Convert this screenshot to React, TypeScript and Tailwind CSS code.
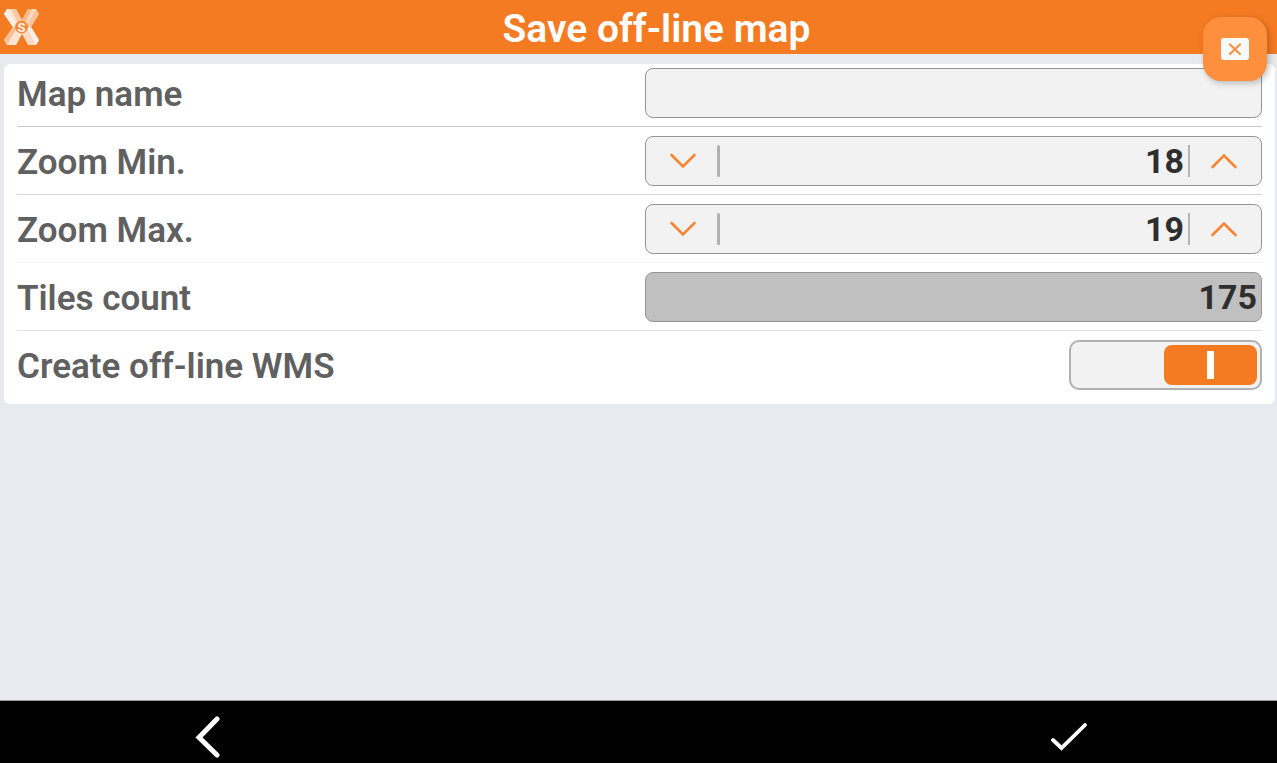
import { useState } from 'react';
import type { ReactNode } from 'react';

interface FieldRowProps {
  id: string;
  label: string;
  lineClass?: string;
  children: ReactNode;
}

function FieldRow({ id, label, lineClass, children }: FieldRowProps) {
  return (
    <div
      className={`grid grid-cols-2 items-center gap-[11px] border-b pt-[9px] pb-2 first:pt-1 last:border-b-0 last:pb-[14px] ${lineClass ?? 'border-[#d6d6d6]'}`}
    >
      <label htmlFor={id} className="pt-1 text-[35px] leading-[46px] font-semibold whitespace-nowrap text-[#606060]">
        {label}
      </label>
      {children}
    </div>
  );
}

function Chevron({ up = false }: { up?: boolean }) {
  return (
    <svg viewBox="0 0 28 16" className="h-4 w-7" fill="none" stroke="#fa8530" strokeWidth="2.6" strokeLinecap="round">
      <path d={up ? 'M2.5 14 14 2.5 25.5 14' : 'M2.5 2 14 13.5 25.5 2'} />
    </svg>
  );
}

interface StepperProps {
  id: string;
  name: string;
  value: number;
  onChange: (value: number) => void;
}

function Stepper({ id, name, value, onChange }: StepperProps) {
  return (
    <div className="flex h-[50px] items-center rounded-lg border border-[#959595] bg-[#f2f2f2]">
      <button
        type="button"
        aria-label={`Decrease ${name}`}
        onClick={() => onChange(value - 1)}
        className="grid h-full w-[71px] shrink-0 place-items-center pl-[2px]"
      >
        <Chevron />
      </button>
      <span className="h-8 w-[3px] shrink-0 rounded-sm bg-[#b0b0b0]" />
      <input
        id={id}
        inputMode="numeric"
        value={value}
        onChange={(e) => onChange(Number(e.target.value) || 0)}
        className="h-full min-w-0 flex-1 bg-transparent pr-1 text-right text-[34px] font-bold text-[#2e2e2e] outline-none"
      />
      <span className="h-8 w-[2px] shrink-0 bg-[#b4b4b4]" />
      <button
        type="button"
        aria-label={`Increase ${name}`}
        onClick={() => onChange(value + 1)}
        className="grid h-full w-[71px] shrink-0 place-items-center pr-1"
      >
        <Chevron up />
      </button>
    </div>
  );
}

function Logo() {
  return (
    <svg viewBox="0 0 36 38" className="h-[38px] w-9 shrink-0" aria-hidden="true">
      {/* left half */}
      <path d="M0 6 3 1h9l6 11v14l-6 11H3l-3-5 9-13z" fill="#fde3d2" />
      <path d="M0 6 3 1l10 17-4 1z" fill="#fef0e6" />
      <path d="m7 1 5 0 6 11-4 3z" fill="#fcc8a3" />
      <path d="m0 32 9-13 4 1L3 37z" fill="#fbbf95" />
      {/* right half */}
      <path d="M35 6l-3-5h-8l-6 11v14l6 11h8l3-5-8-13z" fill="#fdd9c1" />
      <path d="m24 1 4 0-7 14-3-3z" fill="#fbb888" />
      <path d="m32 1 3 5-8 13-4-1z" fill="#fcc39b" />
      <path d="m27 19 8 13-3 5-9-17z" fill="#fef0e6" />
      <circle cx="17.500" cy="19" r="6.500" fill="#f68a3e" />
      <text x="17.500" y="23.500" textAnchor="middle" fontSize="13" fontWeight="700" fill="#fff1e8">
        S
      </text>
    </svg>
  );
}

export default function App() {
  const [mapName, setMapName] = useState('');
  const [zoomMin, setZoomMin] = useState(18);
  const [zoomMax, setZoomMax] = useState(19);
  const [wms, setWms] = useState(true);

  return (
    <div className="relative flex min-h-screen flex-col bg-[#e7eaef] font-[Roboto,sans-serif]">
      <header className="flex h-[54px] items-center bg-[#f57b22] px-1">
        <Logo />
        <h1 className="flex-1 pt-1 text-center text-[39px] leading-[50px] font-semibold text-white">Save off-line map</h1>
      </header>

      <button
        type="button"
        aria-label="Close"
        className="absolute top-[17px] right-[10px] grid h-16 w-16 place-items-center rounded-[18px] bg-[#fe8f3d] shadow-[2px_2px_6px_rgba(0,0,0,0.25)]"
      >
        <svg viewBox="0 0 28 22" className="h-[22px] w-7">
          <rect width="28" height="22" rx="3" fill="#f8fafc" />
          <path d="m9 6.500 10 9.500M19 6.500 9 16" stroke="#fa8f42" strokeWidth="2.200" strokeLinecap="round" />
        </svg>
      </button>

      <main className="flex-1 pt-[10px] pr-[2px] pl-1">
        <form className="rounded-md bg-white px-[13px]">
          <FieldRow id="map-name" label="Map name" lineClass="border-[#cbcbcb]">
            <input
              id="map-name"
              value={mapName}
              onChange={(e) => setMapName(e.target.value)}
              className="h-[50px] w-full rounded-lg border border-[#959595] bg-[#f2f2f2] px-1 text-[34px] font-bold text-[#2e2e2e] outline-none"
            />
          </FieldRow>
          <FieldRow id="zoom-min" label="Zoom Min.">
            <Stepper id="zoom-min" name="zoom min" value={zoomMin} onChange={setZoomMin} />
          </FieldRow>
          <FieldRow id="zoom-max" label="Zoom Max." lineClass="border-[#f3f3f3]">
            <Stepper id="zoom-max" name="zoom max" value={zoomMax} onChange={setZoomMax} />
          </FieldRow>
          <FieldRow id="tiles" label="Tiles count" lineClass="border-[#e2e2e2]">
            <input
              id="tiles"
              readOnly
              value="175"
              className="h-[50px] w-full rounded-lg border border-[#959595] bg-[#c0c0c0] px-1 text-right text-[34px] font-bold text-[#2e2e2e] outline-none"
            />
          </FieldRow>
          <FieldRow id="wms" label="Create off-line WMS">
            <label
              htmlFor="wms"
              className="flex h-[50px] w-[193px] cursor-pointer items-center justify-start justify-self-end rounded-[10px] border-2 border-[#b0b0b0] bg-[#f2f2f2] px-[3px] has-checked:justify-end"
            >
              <input
                id="wms"
                type="checkbox"
                checked={wms}
                onChange={(e) => setWms(e.target.checked)}
                className="sr-only"
              />
              <span className="grid h-10 w-[93px] place-items-center rounded-lg bg-[#f57b22]">
                <span className="h-7 w-[7px] bg-white" />
              </span>
            </label>
          </FieldRow>
        </form>
      </main>

      <nav className="grid h-[63px] grid-cols-3 gap-[14px] border-t border-[#9a9a9a] bg-black pt-[10px]">
        <button type="button" aria-label="Back" className="grid place-items-center">
          <svg viewBox="0 0 26 42" className="h-[42px] w-[26px]" fill="none" stroke="#fff" strokeWidth="5" strokeLinecap="round">
            <path d="M22 3 4 21.500 22 39" />
          </svg>
        </button>
        <button type="button" aria-label="Confirm" className="col-start-3 grid place-items-center">
          <svg viewBox="0 0 38 28" className="h-7 w-[38px]" fill="none" stroke="#fff" strokeWidth="3.800" strokeLinecap="round">
            <path d="m3 17 8.500 8L35 2" />
          </svg>
        </button>
      </nav>
    </div>
  );
}
